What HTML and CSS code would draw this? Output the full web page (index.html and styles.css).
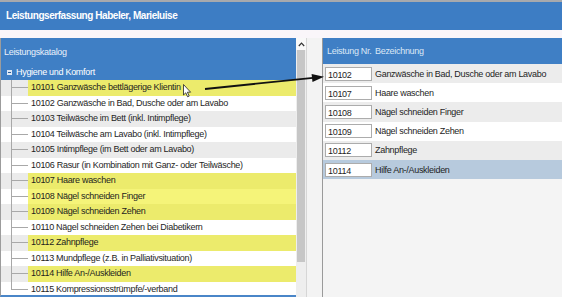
FILE: index.html
```html
<!DOCTYPE html>
<html lang="de">

<head>
  <meta charset="UTF-8" />
  <meta name="viewport" content="width=device-width, initial-scale=1.0" />
  <title>Leistungserfassung</title>
  <link rel="stylesheet" href="styles.css">
</head>

<body>
  <div class="window">
    <header class="titlebar">Leistungserfassung Habeler, Marieluise</header>
    <div class="strip"></div>

    <main class="main">
      <section class="catalog">
        <div class="cat-head">
          <div class="cat-title">Leistungskatalog</div>
          <div class="group"><span class="toggle"></span>Hygiene und Komfort</div>
        </div>
        <ul class="tree">
          <li class="odd marked"><span class="label">10101 Ganzwäsche bettlägerige Klientin</span></li>
          <li><span class="label">10102 Ganzwäsche in Bad, Dusche oder am Lavabo</span></li>
          <li class="odd"><span class="label">10103 Teilwäsche im Bett (inkl. Intimpflege)</span></li>
          <li><span class="label">10104 Teilwäsche am Lavabo (inkl. Intimpflege)</span></li>
          <li class="odd"><span class="label">10105 Intimpflege (im Bett oder am Lavabo)</span></li>
          <li><span class="label">10106 Rasur (in Kombination mit Ganz- oder Teilwäsche)</span></li>
          <li class="odd marked"><span class="label">10107 Haare waschen</span></li>
          <li class="marked"><span class="label">10108 Nägel schneiden Finger</span></li>
          <li class="odd marked"><span class="label">10109 Nägel schneiden Zehen</span></li>
          <li><span class="label">10110 Nägel schneiden Zehen bei Diabetikern</span></li>
          <li class="odd marked"><span class="label">10112 Zahnpflege</span></li>
          <li><span class="label">10113 Mundpflege (z.B. in Palliativsituation)</span></li>
          <li class="odd marked"><span class="label">10114 Hilfe An-/Auskleiden</span></li>
          <li class="last"><span class="label">10115 Kompressionsstrümpfe/-verband</span></li>
        </ul>
      </section>

      <div class="scrollbar">
        <div class="scroll-up">
          <svg width="7" height="5" viewBox="0 0 7 5"><path d="M0.8 4 L3.5 1.2 L6.2 4" fill="none" stroke="#333" stroke-width="1.2" /></svg>
        </div>
        <div class="thumb"></div>
      </div>

      <div class="splitter"></div>

      <section class="selection">
        <div class="sel-head">
          <span class="col-nr">Leistung Nr.</span>
          <span>Bezeichnung</span>
        </div>
        <div class="sel-row odd"><span class="nr">10102</span><span>Ganzwäsche in Bad, Dusche oder am Lavabo</span></div>
        <div class="sel-row"><span class="nr">10107</span><span>Haare waschen</span></div>
        <div class="sel-row odd"><span class="nr">10108</span><span>Nägel schneiden Finger</span></div>
        <div class="sel-row"><span class="nr">10109</span><span>Nägel schneiden Zehen</span></div>
        <div class="sel-row odd"><span class="nr">10112</span><span>Zahnpflege</span></div>
        <div class="sel-row selected"><span class="nr">10114</span><span>Hilfe An-/Auskleiden</span></div>
      </section>
    </main>

    <!-- drag hint drawn over both panels -->
    <svg class="overlay" width="562" height="297" viewBox="0 0 562 297">
      <line x1="205" y1="87" x2="313" y2="75.9" stroke="#111" stroke-width="1.8" />
      <polygon points="324,74.7 312.5,79.9 311.6,72" fill="#111" />
      <path d="M183.5 82.5 L183.5 93 L185.8 90.8 L187.6 94.8 L189.2 94.1 L187.4 90.2 L190.6 90.2 Z" fill="#fff" stroke="#222" stroke-width="0.8" />
    </svg>
  </div>
</body>

</html>
```

FILE: styles.css
```css
body {
  margin: 0;
  font-family: "Liberation Sans", Arial, sans-serif;
  font-size: 9px;
  letter-spacing: -0.3px;
  color: #1e1e1e;
  background: #f3f3f3;
}

.window {
  position: relative;
  width: 562px;
  height: 297px;
  overflow: hidden;
  border-top: 2px solid #a7a9ad;
  box-sizing: border-box;
  display: flex;
  flex-direction: column;
}

.titlebar {
  height: 28px;
  line-height: 28px;
  padding-left: 6px;
  background: #3d7dc4;
  color: #fff;
  font-size: 10px;
  font-weight: bold;
  letter-spacing: -0.45px;
}

.strip {
  height: 8px;
  background: #faf6fa;
}

.main {
  flex: 1;
  display: flex;
  min-height: 0;
}

/* left: catalog tree */
.catalog {
  width: 296px;
  border-left: 1px solid #9c9c9c;
  border-bottom: 2px solid #4a86c8;
  box-sizing: border-box;
  overflow: hidden;
  background: #fff;
}

.cat-head {
  height: 42px;
  background: #3f7fc5;
  color: #fff;
}

.cat-title {
  height: 27px;
  line-height: 28px;
  padding-left: 3px;
  color: #eaf1fa;
}

.group {
  height: 15px;
  line-height: 13px;
  display: flex;
  align-items: center;
  gap: 4px;
  padding-left: 6px;
}

.toggle {
  width: 5px;
  height: 5px;
  background: linear-gradient(#2f5f98, #2f5f98) center / 3px 1px no-repeat, #dce7f4;
}

.tree {
  list-style: none;
  margin: 0;
  padding: 0;
}

.tree li {
  height: 15.5px;
  line-height: 15.5px;
  padding-left: 27px;
  background:
    linear-gradient(#a8a8a8, #a8a8a8) 10px 0 / 1px 100% no-repeat,
    linear-gradient(#a8a8a8, #a8a8a8) 10px 50% / 17px 1px no-repeat,
    #fff;
  white-space: nowrap;
}

.tree li.odd {
  background:
    linear-gradient(#a8a8a8, #a8a8a8) 10px 0 / 1px 100% no-repeat,
    linear-gradient(#a8a8a8, #a8a8a8) 10px 50% / 17px 1px no-repeat,
    #ebebeb;
}

.tree li.last {
  background:
    linear-gradient(#a8a8a8, #a8a8a8) 10px 0 / 1px 50% no-repeat,
    linear-gradient(#a8a8a8, #a8a8a8) 10px 50% / 17px 1px no-repeat,
    #fff;
}

.label {
  display: block;
  padding-left: 3px;
}

.marked .label {
  background: #f5f479;
}

.odd.marked .label {
  background: #eceb6c;
}

/* scrollbar */
.scrollbar {
  width: 10px;
  background: #eeeeee;
  display: flex;
  flex-direction: column;
}

.scroll-up {
  height: 12px;
  background: #f9f9f9;
  display: flex;
  align-items: center;
  justify-content: center;
}

.thumb {
  height: 212px;
  width: 8px;
  margin-left: 1px;
  background: #c6c6c6;
}

.splitter {
  width: 16px;
  background: #f3f3f3;
  border-left: 1px solid #d6d6d6;
  box-sizing: border-box;
}

/* right: selected services */
.selection {
  flex: 1;
  border-left: 1px solid #9a9a9a;
  background: #f4f4f4;
}

.sel-head {
  height: 26px;
  line-height: 26px;
  padding-left: 4px;
  display: flex;
  background: #3f7fc5;
  color: #dbe7f5;
}

.col-nr {
  width: 48px;
}

.sel-row {
  height: 19.2px;
  display: flex;
  align-items: center;
  gap: 3px;
  padding-left: 2px;
  background: #fff;
}

.sel-row.odd {
  background: #ececec;
}

.sel-row.selected {
  background: #b7cadd;
}

.nr {
  width: 47px;
  height: 14px;
  line-height: 14px;
  padding-left: 2px;
  box-sizing: border-box;
  border: 1px solid #acacac;
  background: #fff;
}

.overlay {
  position: absolute;
  top: 0;
  left: 0;
  pointer-events: none;
}
```
